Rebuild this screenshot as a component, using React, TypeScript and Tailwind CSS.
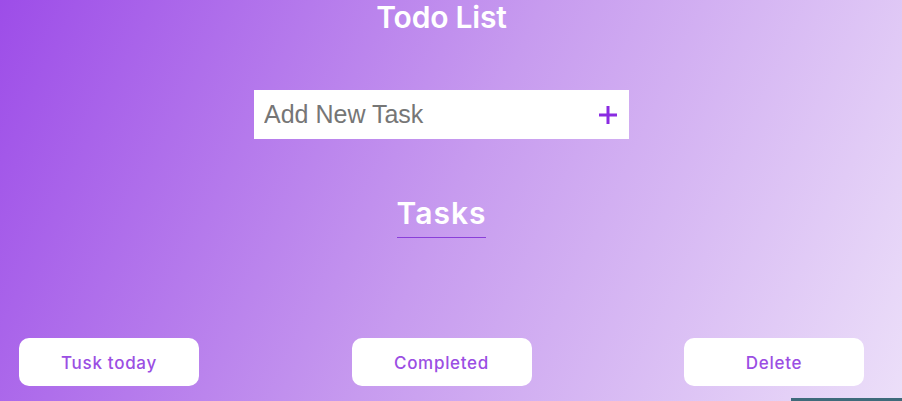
import type { FunctionComponent } from "react";

const TabButton: FunctionComponent<{ label: string }> = ({ label }) => {
  return (
    <button className="w-[180px] h-[48px] pt-[3px] rounded-[10px] bg-white text-[17px] font-medium tracking-[0.7px] text-[#9b4ee3] font-['Inter',sans-serif]">
      {label}
    </button>
  );
};

export default function App() {
  return (
    <div className="h-[401px] w-full flex flex-col bg-[linear-gradient(115deg,#9d4de8_0%,#c79bef_50%,#ecdff9_100%)] font-['Inter',sans-serif]">
      <div className="h-[398px] w-[883px] flex flex-col items-center">
        <h1 className="text-[30px] leading-[34px] font-semibold text-white tracking-[-0.2px]">
          Todo List
        </h1>

        <div className="mt-[56px] w-[375px] h-[49px] bg-white flex items-center pl-[10px] pr-[11px]">
          <input
            className="flex-1 min-w-0 outline-none bg-transparent text-[25px] text-[#333] placeholder:text-[#767676] font-['Liberation_Sans',Arial,sans-serif]"
            placeholder="Add New Task"
          />
          <svg width="20" height="20" viewBox="0 0 20 20" className="shrink-0">
            <path d="M10 1v18M1 10h18" stroke="#8a2be2" strokeWidth="3" />
          </svg>
        </div>

        <div className="mt-[56px] inline-block border-b border-[#8a3fd9] pb-[6px]">
          <h2 className="text-[30px] leading-[36px] font-semibold text-white tracking-[1px]">Tasks</h2>
        </div>

        <div className="mt-auto mb-[12px] w-full flex px-[19px] justify-between">
          <TabButton label="Tusk today" />
          <TabButton label="Completed" />
          <TabButton label="Delete" />
        </div>
      </div>
      <div className="flex justify-end">
        <div className="w-[111px] h-[3px] bg-[#3f6a7b]" />
      </div>
    </div>
  );
}
